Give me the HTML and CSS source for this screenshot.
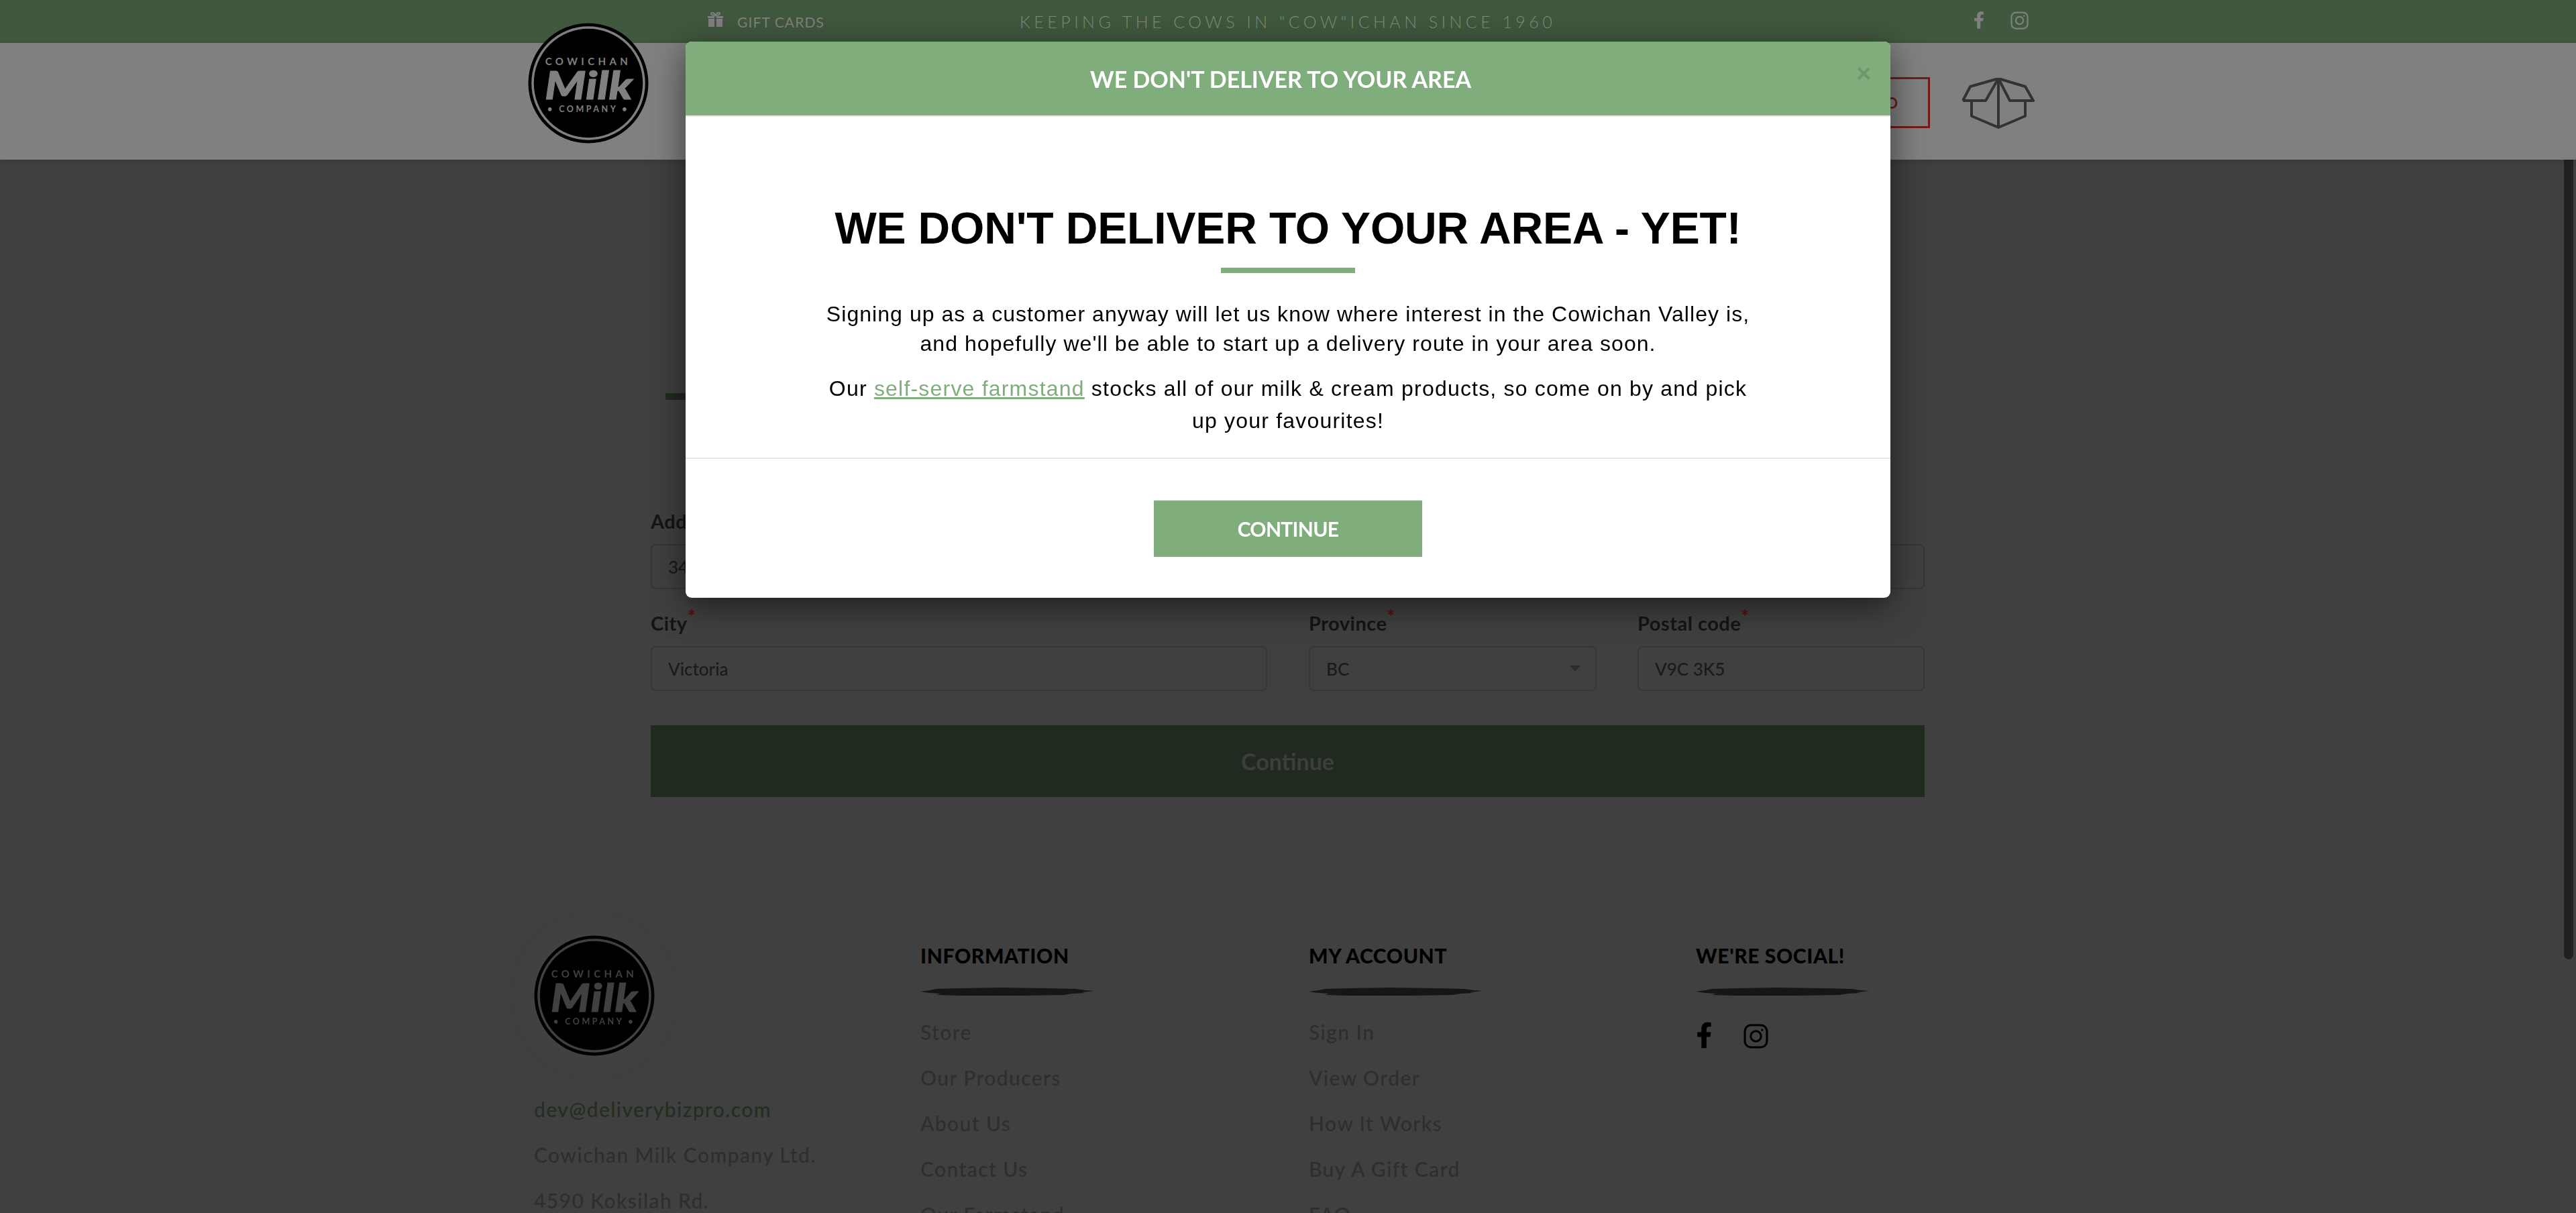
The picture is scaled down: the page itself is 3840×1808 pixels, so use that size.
FILE: index.html
```html
<!DOCTYPE html>
<html lang="en">
  <head>
    <title>Cowichan Milk Company</title>
    <link rel="stylesheet" href="styles.css">
  </head>
  <body>
    <svg class="defs" width="0" height="0">
      <defs>
        <path id="icon-f" d="M279.14 288l14.22-92.66h-88.91v-60.13c0-25.35 12.42-50.06 52.24-50.06h40.42V6.26S260.43 0 225.36 0c-73.22 0-121.08 44.38-121.08 124.72v70.62H22.89V288h81.39v224h100.17V288z"/>
        <g id="icon-ig" fill="none" stroke="currentColor" stroke-width="3">
          <rect x="2" y="2" width="32" height="32" rx="9"/>
          <circle cx="18" cy="18" r="7.5"/>
          <circle cx="27" cy="9" r="1.2" fill="currentColor" stroke-width="1"/>
        </g>
        <path id="brush" d="M0 6 L14 4 L24 2 L60 1 L120 0 L190 1 L232 2 L246 4 L259 5 L240 7 L246 8 L226 9 L214 11 L150 12 L60 12 L24 11 L30 9 L14 8 Z"/>
        <g id="logo">
          <circle cx="90" cy="90" r="89.5" fill="#000"/>
          <circle class="logo-ring" cx="90" cy="90" r="83" fill="none" stroke-width="3.5"/>
          <text class="logo-top" x="90" y="63" text-anchor="middle">COWICHAN</text>
          <text class="logo-milk" x="25" y="114" textLength="131" lengthAdjust="spacingAndGlyphs">Milk</text>
          <text class="logo-bottom" x="90" y="133" text-anchor="middle">• COMPANY •</text>
        </g>
      </defs>
    </svg>

    <div class="topbar">
      <a class="gift-link">
        <svg class="gift-icon" viewBox="0 0 25 22">
          <path d="M1 6h10v3H1zM14 6h10v3H14zM2 10h9v12H2zM14 10h9v12h-9z"/>
          <path d="M12.500 5C9 5 6 4 6 2s4-2.500 6.500 3C15-.5 19 0 19 2s-3 3-6.500 3z" fill="none" stroke="currentColor" stroke-width="2"/>
        </svg>
        GIFT CARDS
      </a>
      <div class="tagline">KEEPING THE COWS IN "COW"ICHAN SINCE 1960</div>
      <div class="top-social">
        <svg class="top-f" viewBox="0 0 320 512"><use href="#icon-f"/></svg>
        <svg class="top-ig" viewBox="0 0 36 36"><use href="#icon-ig"/></svg>
      </div>
    </div>

    <header class="site-header">
      <svg class="header-logo" viewBox="0 0 180 180"><use href="#logo"/></svg>
      <a class="order-btn">O</a>
      <svg class="box-icon" viewBox="0 0 110 76">
        <path d="M2 34L13 13L55 1L95 13L107 34H72L55 1L36 34H2M55 1V74M15 34V57L55 74L95 57V34"/>
      </svg>
    </header>

    <main class="content">
      <div class="title-rule"></div>
      <form class="address-form">
        <div class="field">
          <label>Address<sup>*</sup></label>
          <input type="text" value="3456 Oak St">
        </div>
        <div class="field">
          <label>Unit</label>
          <input type="text">
        </div>
        <div class="field">
          <label>City<sup>*</sup></label>
          <input type="text" value="Victoria">
        </div>
        <div class="field-pair">
          <div class="field">
            <label>Province<sup>*</sup></label>
            <div class="select-wrap">
              <select><option>BC</option></select>
            </div>
          </div>
          <div class="field">
            <label>Postal code<sup>*</sup></label>
            <input type="text" value="V9C 3K5">
          </div>
        </div>
        <button type="button" class="submit-btn">Continue</button>
      </form>
    </main>

    <footer class="site-footer">
      <div class="footer-col contact">
        <svg class="footer-logo" viewBox="0 0 180 180"><use href="#logo"/></svg>
        <a class="email">dev@deliverybizpro.com</a>
        <div>Cowichan Milk Company Ltd.</div>
        <div>4590 Koksilah Rd.</div>
      </div>
      <div class="footer-col">
        <h4>INFORMATION</h4>
        <svg class="brush" viewBox="0 0 259 12"><use href="#brush"/></svg>
        <a>Store</a>
        <a>Our Producers</a>
        <a>About Us</a>
        <a>Contact Us</a>
        <a>Our Farmstand</a>
      </div>
      <div class="footer-col">
        <h4>MY ACCOUNT</h4>
        <svg class="brush" viewBox="0 0 259 12"><use href="#brush"/></svg>
        <a>Sign In</a>
        <a>View Order</a>
        <a>How It Works</a>
        <a>Buy A Gift Card</a>
        <a>FAQ</a>
      </div>
      <div class="footer-col">
        <h4>WE'RE SOCIAL!</h4>
        <svg class="brush" viewBox="0 0 259 12"><use href="#brush"/></svg>
        <div class="footer-social">
          <svg class="footer-f" viewBox="20 0 280 512"><use href="#icon-f"/></svg>
          <svg class="footer-ig" viewBox="0 0 36 36"><use href="#icon-ig"/></svg>
        </div>
      </div>
    </footer>

    <div class="scroll-thumb"></div>

    <div class="modal-layer">
      <div class="modal">
        <div class="modal-head">
          <span>WE DON'T DELIVER TO YOUR AREA</span>
          <span class="modal-close">×</span>
        </div>
        <div class="modal-body">
          <h2>WE DON'T DELIVER TO YOUR AREA - YET!</h2>
          <div class="modal-rule"></div>
          <p class="intro">
            Signing up as a customer anyway will let us know where interest in the Cowichan Valley is,<br>
            and hopefully we'll be able to start up a delivery route in your area soon.
          </p>
          <p class="farmstand">
            Our <a>self-serve farmstand</a> stocks all of our milk &amp; cream products, so come on by and pick<br>
            up your favourites!
          </p>
        </div>
        <div class="modal-foot">
          <button type="button" class="modal-btn">CONTINUE</button>
        </div>
      </div>
    </div>
  </body>
</html>
```

FILE: styles.css
```css
html, body {
  height: 1808px;
  margin: 0;
  overflow: hidden;
}

body {
  background: #404040;
  color: #2e2e2e;
  font-family: Lato, sans-serif;
  position: relative;
}

.defs {
  display: block;
  height: 0;
}

.logo-ring {
  stroke: var(--logo-ink);
}

.logo-top, .logo-bottom, .logo-milk {
  fill: var(--logo-ink);
}

.logo-top {
  font-size: 15px;
  font-weight: 700;
  letter-spacing: 5.4px;
}

.logo-bottom {
  font-size: 12.5px;
  font-weight: 700;
  letter-spacing: 3.5px;
}

.logo-milk {
  font-size: 58px;
  font-style: italic;
  font-weight: 900;
  stroke: var(--logo-ink);
  stroke-linejoin: round;
  stroke-width: 1;
}

/* top strip */
.topbar {
  align-items: center;
  background: #40583e;
  color: #808080;
  display: grid;
  grid-template-columns: 466px 793px 1fr;
  height: 64px;
  padding-left: 1054px;
}

.gift-link {
  align-items: center;
  display: flex;
  font-size: 21px;
  gap: 20px;
  letter-spacing: 1.1px;
  margin-top: 1px;
  white-space: nowrap;
}

.gift-icon {
  fill: currentColor;
  height: 22px;
  margin-top: -8px;
  width: 25px;
}

.tagline {
  color: #7d8b7b;
  font-size: 25px;
  font-weight: 300;
  letter-spacing: 5.45px;
  white-space: nowrap;
}

.top-social {
  align-items: center;
  color: #808080;
  display: flex;
  gap: 39px;
  margin-top: -4px;
  padding-left: 629px;
}

.top-f {
  fill: currentColor;
  height: 28px;
  width: 16px;
}

.top-ig {
  height: 27px;
  width: 27px;
}

/* header */
.site-header {
  align-items: center;
  background: #808080;
  box-shadow: 0 2px 8px rgba(0, 0, 0, .15);
  display: flex;
  height: 174px;
  justify-content: flex-end;
  padding-right: 806px;
  position: relative;
  z-index: 2;
}

.header-logo {
  height: 180px;
  left: 787px;
  position: absolute;
  top: -30px;
  width: 180px;
  --logo-ink: #808080;
}

.order-btn {
  align-items: center;
  border: 3px solid #741a1a;
  box-sizing: border-box;
  color: #741a1a;
  display: flex;
  font-size: 22px;
  font-weight: 700;
  height: 76px;
  justify-content: flex-end;
  margin-right: 47px;
  margin-top: 4px;
  padding-right: 45px;
  width: 300px;
}

.box-icon {
  fill: none;
  height: 76px;
  margin-top: 6px;
  stroke: #333;
  stroke-linejoin: round;
  stroke-width: 4;
  width: 110px;
}

/* form */
.content {
  box-sizing: border-box;
  height: 1156px;
  margin-left: 970px;
  padding-top: 348px;
  width: 1899px;
}

.title-rule {
  background: #21291f;
  height: 10px;
  margin-left: 22px;
  width: 200px;
}

.address-form {
  display: grid;
  gap: 30px 62px;
  grid-template-columns: 919px 918px;
  margin-top: 160px;
}

.field-pair {
  display: grid;
  gap: 61px;
  grid-template-columns: 429px 428px;
}

.field label {
  color: #141414;
  display: block;
  font-size: 29px;
  font-weight: 700;
  height: 41px;
  letter-spacing: .5px;
  line-height: 41px;
  margin-bottom: 14px;
}

.field sup {
  color: #5a0f0f;
  font-size: 28px;
  line-height: 0;
}

.field input, .field select {
  appearance: none;
  background: transparent;
  border: 2px solid #363636;
  border-radius: 7px;
  box-sizing: border-box;
  color: #1a1a1a;
  display: block;
  font-family: Lato, sans-serif;
  font-size: 26px;
  font-weight: 500;
  height: 67px;
  padding: 0 24px;
  width: 100%;
}

.select-wrap {
  position: relative;
}

.select-wrap::after {
  border-left: 8px solid transparent;
  border-right: 8px solid transparent;
  border-top: 9px solid #2b2b2b;
  content: "";
  position: absolute;
  right: 24px;
  top: 29px;
}

.submit-btn {
  background: #212a1f;
  border: 0;
  color: #3e3e3e;
  font-family: Lato, sans-serif;
  font-size: 34px;
  font-weight: 700;
  grid-column: 1 / 3;
  height: 107px;
  margin-top: 21px;
}

/* footer */
.site-footer {
  display: grid;
  grid-template-columns: 576px 579px 577px 1fr;
  padding-left: 796px;
}

.footer-col {
  display: flex;
  flex-direction: column;
  font-size: 30px;
  font-weight: 500;
  letter-spacing: 1.4px;
  line-height: 68px;
  white-space: nowrap;
}

.footer-col h4 {
  color: #000;
  font-size: 30px;
  font-weight: 900;
  letter-spacing: .6px;
  line-height: 40px;
  margin: 10px 0 0;
}

.brush {
  fill: #141715;
  height: 12px;
  margin: 28px 0 20px;
  width: 259px;
}

.footer-logo {
  filter: drop-shadow(0 0 16px rgba(70, 70, 70, .6));
  height: 180px;
  margin-bottom: 45px;
  width: 180px;
  --logo-ink: #404040;
}

.email {
  color: #222e20;
}

.footer-social {
  align-items: flex-end;
  color: #000;
  display: flex;
  gap: 48px;
  height: 40px;
  margin: 19px 0 0 2px;
}

.footer-f {
  fill: #000;
  height: 40px;
  width: 21px;
}

.footer-ig {
  height: 37px;
  width: 37px;
}

.scroll-thumb {
  background: #212121;
  border-radius: 0 0 7px 7px;
  height: 1192px;
  left: 3822px;
  position: absolute;
  top: 238px;
  width: 14px;
}

/* modal */
.modal-layer {
  display: flex;
  inset: 0;
  justify-content: center;
  padding-top: 62px;
  position: fixed;
  z-index: 5;
}

.modal {
  align-self: flex-start;
  background: #fff;
  border-radius: 9px;
  box-shadow: 0 12px 50px rgba(0, 0, 0, .55);
  overflow: hidden;
  width: 1796px;
}

.modal-head {
  align-items: center;
  background: #7fae7c;
  border-bottom: 2px solid #e5e5e5;
  color: #fff;
  display: flex;
  font-size: 34px;
  font-weight: 700;
  height: 110px;
  justify-content: center;
  padding-right: 22px;
  position: relative;
}

.modal-close {
  color: #6c976b;
  font-size: 40px;
  font-weight: 900;
  line-height: 40px;
  position: absolute;
  right: 28px;
  top: 26px;
}

.modal-body {
  color: #000;
  font-family: "Liberation Sans", Arial, sans-serif;
  height: 508px;
  text-align: center;
}

.modal-body h2 {
  font-size: 66px;
  font-weight: 700;
  letter-spacing: -.15px;
  line-height: 80px;
  margin: 0;
  padding-top: 126px;
}

.modal-rule {
  background: #7fae7c;
  height: 8px;
  margin: 19px auto 0;
  width: 200px;
}

.modal-body p {
  font-size: 32px;
  margin: 0;
}

.intro {
  letter-spacing: 1.05px;
  line-height: 44px;
  padding-top: 39px;
}

.farmstand {
  letter-spacing: 1.2px;
  line-height: 48px;
  padding-top: 21px;
}

.farmstand a {
  color: #7fae7c;
  text-decoration: underline;
}

.modal-foot {
  align-items: flex-start;
  border-top: 2px solid #e5e5e5;
  box-sizing: border-box;
  display: flex;
  height: 209px;
  justify-content: center;
  padding-top: 62px;
}

.modal-btn {
  background: #7fae7c;
  border: 0;
  color: #fff;
  font-family: Lato, sans-serif;
  font-size: 30px;
  font-weight: 700;
  height: 84px;
  letter-spacing: -.7px;
  width: 400px;
}
```
